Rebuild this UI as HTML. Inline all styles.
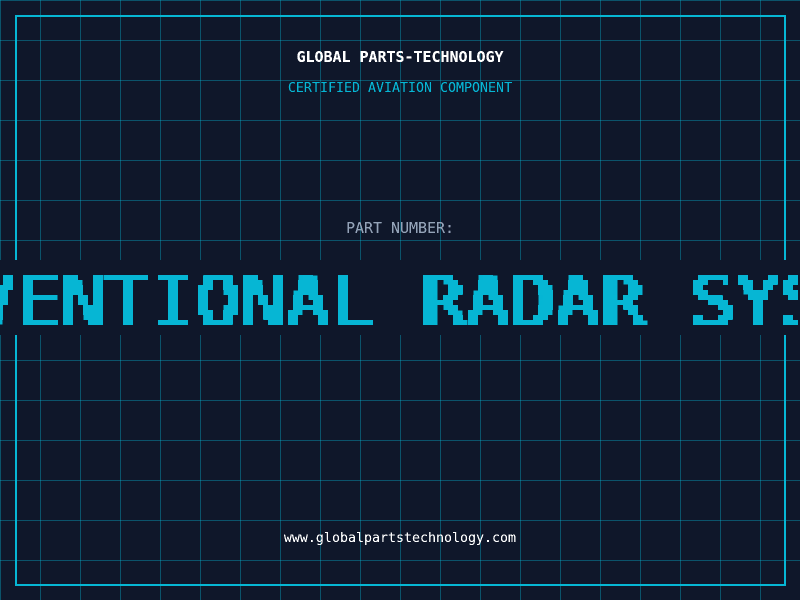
<!DOCTYPE html>
<html><head><meta charset="utf-8"><style>
html,body{margin:0;padding:0;width:800px;height:600px;overflow:hidden;background:#0f172a}
#g{position:absolute;left:0;top:0;width:800px;height:600px;background-color:#0f172a;background-image:linear-gradient(rgba(6,182,212,.38) 1px,transparent 1px),linear-gradient(90deg,rgba(6,182,212,.38) 1px,transparent 1px);background-size:40px 40px}
#f{position:absolute;left:15px;top:15px;width:767px;height:567px;border:2px solid #06b6d4}
.t{position:absolute;left:0;width:800px;text-align:center;font-family:"DejaVu Sans Mono",monospace;white-space:nowrap;filter:url(#sharp)}
#band{position:absolute;left:0;top:260px;width:800px;height:75px;background:#0f172a}
svg{position:absolute;left:0;top:0}
</style></head><body>
<div id="g"></div><div id="f"></div>
<div class="t" style="top:49px;font-size:15px;line-height:17px;color:#fff;font-weight:bold;letter-spacing:-.03px">GLOBAL PARTS-TECHNOLOGY</div>
<div class="t" style="top:81px;font-size:13.3px;line-height:16px;color:#06b6d4">CERTIFIED AVIATION COMPONENT</div>
<div class="t" style="top:220px;font-size:15px;line-height:17px;color:#94a3b8;letter-spacing:-.03px">PART NUMBER:</div>
<div class="t" style="top:531px;font-size:13.3px;line-height:16px;color:#fff">www.globalpartstechnology.com</div>
<div id="band"></div>
<svg width="800" height="600" viewBox="0 0 800 600">
<defs><filter id="sharp" x="0" y="0" width="100%" height="100%" color-interpolation-filters="sRGB"><feComponentTransfer><feFuncA type="linear" slope="2.2" intercept="-.45"/></feComponentTransfer></filter>
<filter id="px" filterUnits="userSpaceOnUse" primitiveUnits="userSpaceOnUse" x="-2" y="260" width="802" height="75" color-interpolation-filters="sRGB">
<feMorphology in="SourceGraphic" operator="dilate" radius="2 0" result="a"/>
<feFlood x="0" y="262" width="1" height="1" flood-color="#000"/>
<feComposite x="-2" y="260" width="5" height="5" result="c"/>
<feTile in="c" result="t"/>
<feComposite in="a" in2="t" operator="in"/>
<feMorphology operator="dilate" radius="2"/>
<feComponentTransfer><feFuncA type="discrete" tableValues="0 1 1 1"/></feComponentTransfer>
</filter></defs>
<g filter="url(#px)"><text transform="translate(0 325) scale(1.06 1)" x="-154.6" y="0" font-family="DejaVu Sans Mono" font-size="68.6" fill="#06b6d4" xml:space="preserve" style="letter-spacing:1.15px">CONVENTIONAL RADAR SYSTEM</text></g>
</svg>
</body></html>
